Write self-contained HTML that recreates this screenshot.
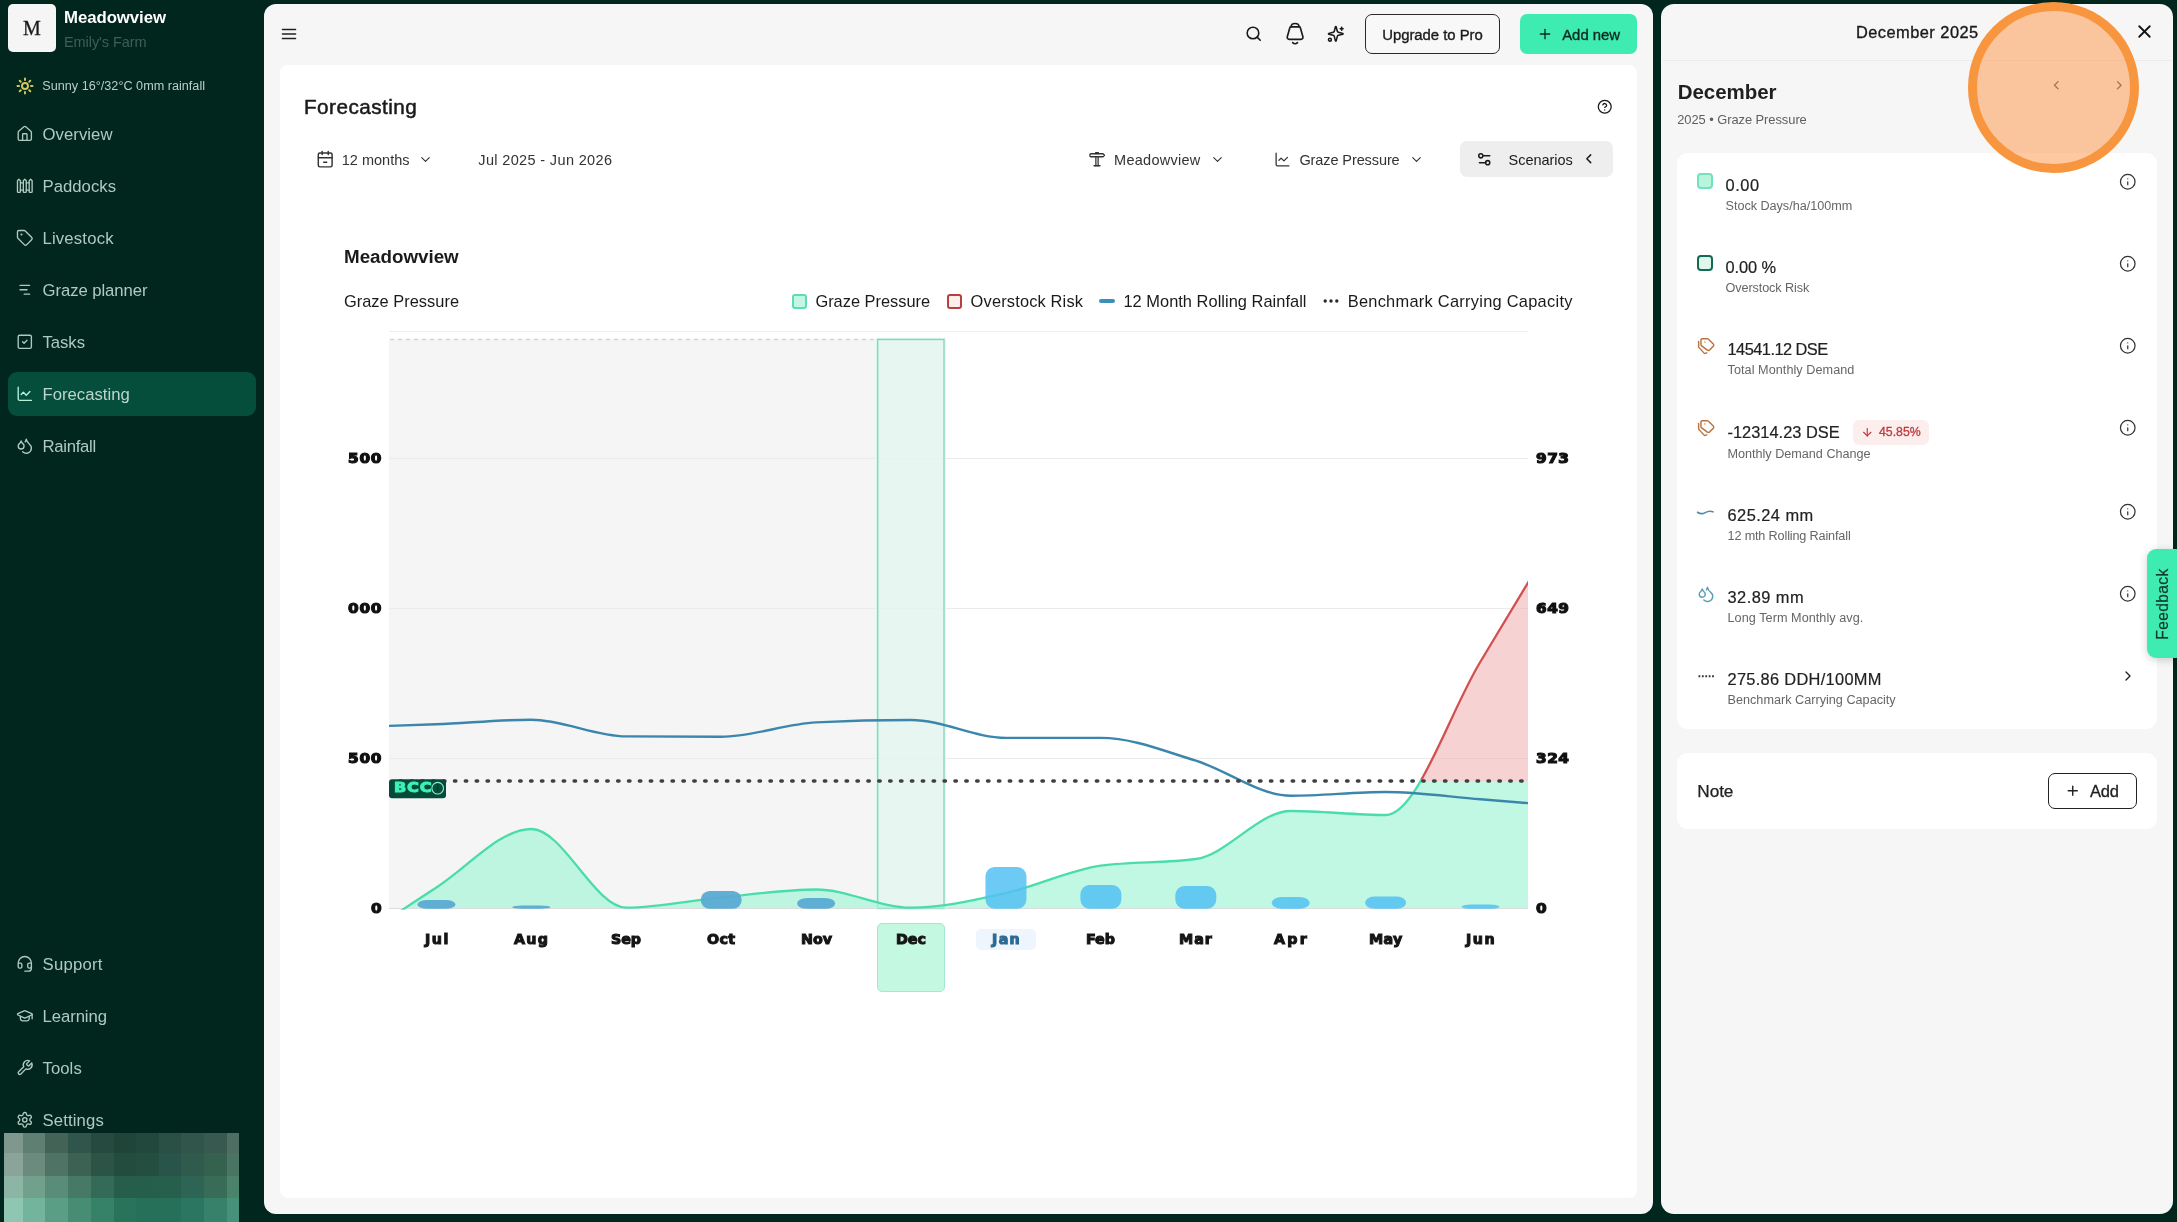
<!DOCTYPE html>
<html lang="en"><head><meta charset="utf-8"><title>Forecasting - Meadowview</title>
<style>
*{box-sizing:border-box;margin:0;padding:0}
html,body{width:2177px;height:1222px;overflow:hidden;background:#01261d;font-family:'Liberation Sans', sans-serif}
#app{position:absolute;left:0;top:0;width:2177px;height:1222px;will-change:transform}
.t{position:absolute;white-space:nowrap}
.b{position:absolute}
.ic{position:absolute;overflow:visible}
svg.full{position:absolute;left:0;top:0;width:2177px;height:1222px;overflow:hidden}
</style></head>
<body>
<div id="app">
<div class="b" style="left:8px;top:4px;width:48px;height:48px;background:#f5f5f5;border-radius:5px"></div>
<div class="t" id="logoM" style="left:23.00px;top:18.00px;font-size:20px;line-height:20px;color:#1a1a1a;font-weight:400;font-family:'Liberation Serif', serif;letter-spacing:0.000px;-webkit-text-stroke:0.3px #1a1a1a;">M</div>
<div class="t" id="sbTitle" style="left:64.00px;top:10.00px;font-size:16.8px;line-height:16.8px;color:#ffffff;font-weight:700;font-family:'Liberation Sans', sans-serif;letter-spacing:-0.066px;">Meadowview</div>
<div class="t" id="sbSub" style="left:64.00px;top:35.00px;font-size:14.5px;line-height:14.5px;color:#3d6054;font-weight:400;font-family:'Liberation Sans', sans-serif;letter-spacing:-0.075px;">Emily's Farm</div>
<svg class="ic" style="left:16.20px;top:76.80px;width:18px;height:18px;color:#d2c75e" viewBox="0 0 24 24" fill="none" stroke="currentColor" stroke-width="2.6" stroke-linecap="round" stroke-linejoin="round" ><circle cx="12" cy="12" r="4"/><path d="M12 2v2"/><path d="M12 20v2"/><path d="m4.93 4.93 1.41 1.41"/><path d="m17.66 17.66 1.41 1.41"/><path d="M2 12h2"/><path d="M20 12h2"/><path d="m6.34 17.66-1.41 1.41"/><path d="m19.07 4.93-1.41 1.41"/></svg>
<div class="t" id="weather" style="left:42.30px;top:80.00px;font-size:12.65px;line-height:12.65px;color:#b9cec7;font-weight:400;font-family:'Liberation Sans', sans-serif;letter-spacing:0.005px;">Sunny 16°/32°C 0mm rainfall</div>
<div class="b" style="left:8px;top:372px;width:248px;height:44px;background:#054e3c;border-radius:9px"></div>
<svg class="ic" style="left:16.00px;top:125.20px;width:17.6px;height:17.6px;color:#b0c9c1" viewBox="0 0 24 24" fill="none" stroke="currentColor" stroke-width="1.85" stroke-linecap="round" stroke-linejoin="round" ><path d="M15 21v-8a1 1 0 0 0-1-1h-4a1 1 0 0 0-1 1v8"/><path d="M3 10a2 2 0 0 1 .709-1.528l7-5.999a2 2 0 0 1 2.582 0l7 5.999A2 2 0 0 1 21 10v9a2 2 0 0 1-2 2H5a2 2 0 0 1-2-2z"/></svg>
<div class="t" id="nav0" style="left:42.50px;top:127.00px;font-size:16.7px;line-height:16.7px;color:#b0c9c1;font-weight:400;font-family:'Liberation Sans', sans-serif;letter-spacing:0.065px;">Overview</div>
<svg class="ic" style="left:16.00px;top:177.20px;width:17.6px;height:17.6px;color:#b0c9c1" viewBox="0 0 24 24" fill="none" stroke="currentColor" stroke-width="1.85" stroke-linecap="round" stroke-linejoin="round" ><path d="M4 3 2 5v15c0 .6.4 1 1 1h2c.6 0 1-.4 1-1V5Z"/><path d="M6 8h4"/><path d="M6 18h4"/><path d="m12 3-2 2v15c0 .6.4 1 1 1h2c.6 0 1-.4 1-1V5Z"/><path d="M14 8h4"/><path d="M14 18h4"/><path d="m20 3-2 2v15c0 .6.4 1 1 1h2c.6 0 1-.4 1-1V5Z"/></svg>
<div class="t" id="nav1" style="left:42.50px;top:179.00px;font-size:16.7px;line-height:16.7px;color:#b0c9c1;font-weight:400;font-family:'Liberation Sans', sans-serif;letter-spacing:0.029px;">Paddocks</div>
<svg class="ic" style="left:16.00px;top:229.20px;width:17.6px;height:17.6px;color:#b0c9c1" viewBox="0 0 24 24" fill="none" stroke="currentColor" stroke-width="1.85" stroke-linecap="round" stroke-linejoin="round" ><path d="M12.586 2.586A2 2 0 0 0 11.172 2H4a2 2 0 0 0-2 2v7.172a2 2 0 0 0 .586 1.414l8.704 8.704a2.426 2.426 0 0 0 3.42 0l6.58-6.58a2.426 2.426 0 0 0 0-3.42z"/><circle cx="7.5" cy="7.5" r=".6" fill="currentColor"/></svg>
<div class="t" id="nav2" style="left:42.50px;top:231.00px;font-size:16.7px;line-height:16.7px;color:#b0c9c1;font-weight:400;font-family:'Liberation Sans', sans-serif;letter-spacing:0.180px;">Livestock</div>
<svg class="ic" style="left:16.00px;top:281.20px;width:17.6px;height:17.6px;color:#b0c9c1" viewBox="0 0 24 24" fill="none" stroke="currentColor" stroke-width="1.85" stroke-linecap="round" stroke-linejoin="round" ><path d="M5.500 6H18.500"/><path d="M5.500 12H15"/><path d="M11.200 18H18.500"/></svg>
<div class="t" id="nav3" style="left:42.50px;top:283.00px;font-size:16.7px;line-height:16.7px;color:#b0c9c1;font-weight:400;font-family:'Liberation Sans', sans-serif;letter-spacing:-0.062px;">Graze planner</div>
<svg class="ic" style="left:16.00px;top:333.20px;width:17.6px;height:17.6px;color:#b0c9c1" viewBox="0 0 24 24" fill="none" stroke="currentColor" stroke-width="1.85" stroke-linecap="round" stroke-linejoin="round" ><rect width="18" height="18" x="3" y="3" rx="2"/><path d="m9 12 2 2 4-4"/></svg>
<div class="t" id="nav4" style="left:42.50px;top:335.00px;font-size:16.7px;line-height:16.7px;color:#b0c9c1;font-weight:400;font-family:'Liberation Sans', sans-serif;letter-spacing:-0.039px;">Tasks</div>
<svg class="ic" style="left:16.00px;top:385.20px;width:17.6px;height:17.6px;color:#b4f3da" viewBox="0 0 24 24" fill="none" stroke="currentColor" stroke-width="1.85" stroke-linecap="round" stroke-linejoin="round" ><path d="M3 3v16a2 2 0 0 0 2 2h16"/><path d="m19 9-5 5-4-4-3 3"/></svg>
<div class="t" id="nav5" style="left:42.50px;top:387.00px;font-size:16.7px;line-height:16.7px;color:#bdd5cc;font-weight:400;font-family:'Liberation Sans', sans-serif;letter-spacing:0.006px;">Forecasting</div>
<svg class="ic" style="left:16.00px;top:437.20px;width:17.6px;height:17.6px;color:#b0c9c1" viewBox="0 0 24 24" fill="none" stroke="currentColor" stroke-width="1.85" stroke-linecap="round" stroke-linejoin="round" ><path d="M7 16.3c2.2 0 4-1.83 4-4.05 0-1.16-.57-2.26-1.71-3.19S7.29 6.75 7 5.3c-.29 1.45-1.14 2.84-2.29 3.76S3 11.1 3 12.25c0 2.22 1.8 4.05 4 4.05z"/><path d="M12.56 6.6A10.97 10.97 0 0 0 14 3.02c.5 2.5 2 4.9 4 6.5s3 3.5 3 5.5a6.98 6.98 0 0 1-11.91 4.97"/></svg>
<div class="t" id="nav6" style="left:42.50px;top:439.00px;font-size:16.7px;line-height:16.7px;color:#b0c9c1;font-weight:400;font-family:'Liberation Sans', sans-serif;letter-spacing:-0.272px;">Rainfall</div>
<svg class="ic" style="left:16.00px;top:955.20px;width:17.6px;height:17.6px;color:#b0c9c1" viewBox="0 0 24 24" fill="none" stroke="currentColor" stroke-width="1.85" stroke-linecap="round" stroke-linejoin="round" ><path d="M3 11h3a2 2 0 0 1 2 2v3a2 2 0 0 1-2 2H5a2 2 0 0 1-2-2v-5Zm0 0a9 9 0 1 1 18 0m0 0v5a2 2 0 0 1-2 2h-1a2 2 0 0 1-2-2v-3a2 2 0 0 1 2-2h3Z"/><path d="M21 16v2a4 4 0 0 1-4 4h-5"/></svg>
<div class="t" id="nav7" style="left:42.50px;top:957.00px;font-size:16.7px;line-height:16.7px;color:#b0c9c1;font-weight:400;font-family:'Liberation Sans', sans-serif;letter-spacing:0.258px;">Support</div>
<svg class="ic" style="left:16.00px;top:1007.20px;width:17.6px;height:17.6px;color:#b0c9c1" viewBox="0 0 24 24" fill="none" stroke="currentColor" stroke-width="1.85" stroke-linecap="round" stroke-linejoin="round" ><path d="M21.42 10.922a1 1 0 0 0-.019-1.838L12.83 5.18a2 2 0 0 0-1.66 0L2.6 9.08a1 1 0 0 0 0 1.832l8.57 3.908a2 2 0 0 0 1.66 0z"/><path d="M22 10v6"/><path d="M6 12.5V16a6 3 0 0 0 12 0v-3.5"/></svg>
<div class="t" id="nav8" style="left:42.50px;top:1009.00px;font-size:16.7px;line-height:16.7px;color:#b0c9c1;font-weight:400;font-family:'Liberation Sans', sans-serif;letter-spacing:-0.065px;">Learning</div>
<svg class="ic" style="left:16.00px;top:1059.20px;width:17.6px;height:17.6px;color:#b0c9c1" viewBox="0 0 24 24" fill="none" stroke="currentColor" stroke-width="1.85" stroke-linecap="round" stroke-linejoin="round" ><path d="M14.7 6.3a1 1 0 0 0 0 1.4l1.6 1.6a1 1 0 0 0 1.4 0l3.77-3.77a6 6 0 0 1-7.94 7.94l-6.91 6.91a2.12 2.12 0 0 1-3-3l6.91-6.91a6 6 0 0 1 7.94-7.94l-3.76 3.76z"/></svg>
<div class="t" id="nav9" style="left:42.50px;top:1061.00px;font-size:16.7px;line-height:16.7px;color:#b0c9c1;font-weight:400;font-family:'Liberation Sans', sans-serif;letter-spacing:0.070px;">Tools</div>
<svg class="ic" style="left:16.00px;top:1111.20px;width:17.6px;height:17.6px;color:#b0c9c1" viewBox="0 0 24 24" fill="none" stroke="currentColor" stroke-width="1.85" stroke-linecap="round" stroke-linejoin="round" ><path d="M12.22 2h-.44a2 2 0 0 0-2 2v.18a2 2 0 0 1-1 1.73l-.43.25a2 2 0 0 1-2 0l-.15-.08a2 2 0 0 0-2.73.73l-.22.38a2 2 0 0 0 .73 2.73l.15.1a2 2 0 0 1 1 1.72v.51a2 2 0 0 1-1 1.74l-.15.09a2 2 0 0 0-.73 2.73l.22.38a2 2 0 0 0 2.73.73l.15-.08a2 2 0 0 1 2 0l.43.25a2 2 0 0 1 1 1.73V20a2 2 0 0 0 2 2h.44a2 2 0 0 0 2-2v-.18a2 2 0 0 1 1-1.73l.43-.25a2 2 0 0 1 2 0l.15.08a2 2 0 0 0 2.73-.73l.22-.39a2 2 0 0 0-.73-2.73l-.15-.08a2 2 0 0 1-1-1.74v-.5a2 2 0 0 1 1-1.74l.15-.09a2 2 0 0 0 .73-2.73l-.22-.38a2 2 0 0 0-2.73-.73l-.15.08a2 2 0 0 1-2 0l-.43-.25a2 2 0 0 1-1-1.73V4a2 2 0 0 0-2-2z"/><circle cx="12" cy="12" r="3"/></svg>
<div class="t" id="nav10" style="left:42.50px;top:1113.00px;font-size:16.7px;line-height:16.7px;color:#b0c9c1;font-weight:400;font-family:'Liberation Sans', sans-serif;letter-spacing:0.136px;">Settings</div>
<svg class="full" viewBox="0 0 2177 1222" shape-rendering="crispEdges"><rect x="3.5" y="1133" width="20.0" height="20.5" fill="#7f978d"/><rect x="23" y="1133" width="22.8" height="20.5" fill="#5f7f73"/><rect x="45.3" y="1133" width="23.2" height="20.5" fill="#446357"/><rect x="68" y="1133" width="23.5" height="20.5" fill="#30554a"/><rect x="91" y="1133" width="23.1" height="20.5" fill="#274a40"/><rect x="113.6" y="1133" width="23.1" height="20.5" fill="#1f4438"/><rect x="136.2" y="1133" width="23.1" height="20.5" fill="#22473c"/><rect x="158.8" y="1133" width="23.1" height="20.5" fill="#2a5045"/><rect x="181.4" y="1133" width="23.1" height="20.5" fill="#32554b"/><rect x="204" y="1133" width="23.0" height="20.5" fill="#37594f"/><rect x="226.5" y="1133" width="12.0" height="20.5" fill="#4e6e63"/><rect x="3.5" y="1153" width="20.0" height="23.3" fill="#8aa499"/><rect x="23" y="1153" width="22.8" height="23.3" fill="#6a8b7e"/><rect x="45.3" y="1153" width="23.2" height="23.3" fill="#4f7465"/><rect x="68" y="1153" width="23.5" height="23.3" fill="#3b6252"/><rect x="91" y="1153" width="23.1" height="23.3" fill="#2c5446"/><rect x="113.6" y="1153" width="23.1" height="23.3" fill="#234c3e"/><rect x="136.2" y="1153" width="23.1" height="23.3" fill="#244e40"/><rect x="158.8" y="1153" width="23.1" height="23.3" fill="#29544a"/><rect x="181.4" y="1153" width="23.1" height="23.3" fill="#2f5a4c"/><rect x="204" y="1153" width="23.0" height="23.3" fill="#35614f"/><rect x="226.5" y="1153" width="12.0" height="23.3" fill="#4a7565"/><rect x="3.5" y="1175.8" width="20.0" height="23.1" fill="#8cb5a6"/><rect x="23" y="1175.8" width="22.8" height="23.1" fill="#71a08d"/><rect x="45.3" y="1175.8" width="23.2" height="23.1" fill="#5a8d79"/><rect x="68" y="1175.8" width="23.5" height="23.1" fill="#467a67"/><rect x="91" y="1175.8" width="23.1" height="23.1" fill="#346a58"/><rect x="113.6" y="1175.8" width="23.1" height="23.1" fill="#275e4b"/><rect x="136.2" y="1175.8" width="23.1" height="23.1" fill="#265e4c"/><rect x="158.8" y="1175.8" width="23.1" height="23.1" fill="#275f4d"/><rect x="181.4" y="1175.8" width="23.1" height="23.1" fill="#2e6453"/><rect x="204" y="1175.8" width="23.0" height="23.1" fill="#386c59"/><rect x="226.5" y="1175.8" width="12.0" height="23.1" fill="#4a826c"/><rect x="3.5" y="1198.4" width="20.0" height="24.1" fill="#8ec6b1"/><rect x="23" y="1198.4" width="22.8" height="24.1" fill="#72b49c"/><rect x="45.3" y="1198.4" width="23.2" height="24.1" fill="#5a9e85"/><rect x="68" y="1198.4" width="23.5" height="24.1" fill="#468d73"/><rect x="91" y="1198.4" width="23.1" height="24.1" fill="#358268"/><rect x="113.6" y="1198.4" width="23.1" height="24.1" fill="#28735a"/><rect x="136.2" y="1198.4" width="23.1" height="24.1" fill="#26705a"/><rect x="158.8" y="1198.4" width="23.1" height="24.1" fill="#26705a"/><rect x="181.4" y="1198.4" width="23.1" height="24.1" fill="#2b7660"/><rect x="204" y="1198.4" width="23.0" height="24.1" fill="#37806a"/><rect x="226.5" y="1198.4" width="12.0" height="24.1" fill="#479079"/></svg>
<div class="b" style="left:264px;top:4px;width:1389px;height:1210px;background:#f6f6f6;border-radius:12px"></div>
<div class="b" style="left:280px;top:65px;width:1357px;height:1133px;background:#ffffff;border-radius:8px"></div>
<svg class="full" viewBox="0 0 2177 1222"><g stroke="#222" stroke-width="1.6" stroke-linecap="round"><path d="M282.500 29.500h13M282.500 34h13M282.500 38.500h13"/></g></svg>
<svg class="ic" style="left:1245.10px;top:25.00px;width:17.4px;height:17.4px;color:#1a1a1a" viewBox="0 0 24 24" fill="none" stroke="currentColor" stroke-width="2.2" stroke-linecap="round" stroke-linejoin="round" ><circle cx="11" cy="11" r="8"/><path d="m21 21-4.3-4.3"/></svg>
<svg class="full" viewBox="0 0 2177 1222"><g fill="none" stroke="#1a1a1a" stroke-width="1.650" stroke-linecap="round" stroke-linejoin="round"><path d="M1291.200 26.700c0-2 1.700-3.200 3.900-3.200s3.900 1.200 3.900 3.200"/><path d="M1290.800 26.800h8.600c.500 0 .800.300.900.700l2.600 9.300c.400 1.400-.500 2.500-1.900 2.500h-11.800c-1.400 0-2.300-1.100-1.900-2.500l2.600-9.300c.100-.400.400-.700.900-.700z"/><path d="M1292.700 42.600c1.400 1.600 3.400 1.600 4.800 0"/></g></svg>
<svg class="ic" style="left:1327.10px;top:25.00px;width:17.6px;height:17.6px;color:#1a1a1a" viewBox="0 0 24 24" fill="none" stroke="currentColor" stroke-width="2.1" stroke-linecap="round" stroke-linejoin="round" ><path d="M9.937 15.5A2 2 0 0 0 8.5 14.063l-6.135-1.582a.5.5 0 0 1 0-.962L8.5 9.936A2 2 0 0 0 9.937 8.5l1.582-6.135a.5.5 0 0 1 .963 0L14.063 8.5A2 2 0 0 0 15.5 9.937l6.135 1.581a.5.5 0 0 1 0 .964L15.5 14.063a2 2 0 0 0-1.437 1.437l-1.582 6.135a.5.5 0 0 1-.963 0z"/><path d="M20 3v4"/><path d="M22 5h-4"/><circle cx="4" cy="20" r="2"/></svg>
<div class="b" style="left:1365px;top:14px;width:135px;height:40px;border:1px solid #2a2a2a;border-radius:7px;background:#f8f8f8"></div>
<div class="t" id="upg" style="left:1382.20px;top:28.00px;font-size:14.9px;line-height:14.9px;color:#1a1a1a;font-weight:400;font-family:'Liberation Sans', sans-serif;letter-spacing:-0.031px;-webkit-text-stroke:0.35px #1a1a1a;">Upgrade to Pro</div>
<div class="b" style="left:1520px;top:14px;width:117px;height:40px;background:#3eebb1;border-radius:7px"></div>
<svg class="ic" style="left:1537.00px;top:26.30px;width:16px;height:16px;color:#0b2a20" viewBox="0 0 24 24" fill="none" stroke="currentColor" stroke-width="2" stroke-linecap="round" stroke-linejoin="round" ><path d="M5 12h14"/><path d="M12 5v14"/></svg>
<div class="t" id="addnew" style="left:1562.20px;top:28.00px;font-size:14.9px;line-height:14.9px;color:#0b2a20;font-weight:400;font-family:'Liberation Sans', sans-serif;letter-spacing:-0.009px;-webkit-text-stroke:0.35px #0b2a20;">Add new</div>
<div class="t" id="title" style="left:304.00px;top:97.00px;font-size:20.7px;line-height:20.7px;color:#1a1a1a;font-weight:400;font-family:'Liberation Sans', sans-serif;letter-spacing:0.466px;-webkit-text-stroke:0.5px #1a1a1a;">Forecasting</div>
<svg class="ic" style="left:1597.25px;top:99.25px;width:15.5px;height:15.5px;color:#1a1a1a" viewBox="0 0 24 24" fill="none" stroke="currentColor" stroke-width="2" stroke-linecap="round" stroke-linejoin="round" ><circle cx="12" cy="12" r="10"/><path d="M9.09 9a3 3 0 0 1 5.83 1c0 2-3 3-3 3"/><path d="M12 17h.01"/></svg>
<svg class="ic" style="left:315.80px;top:149.60px;width:18.4px;height:18.4px;color:#333" viewBox="0 0 24 24" fill="none" stroke="currentColor" stroke-width="1.9" stroke-linecap="round" stroke-linejoin="round" ><path d="M8 2v4"/><path d="M16 2v4"/><rect width="18" height="18" x="3" y="4" rx="2"/><path d="M3 10h18"/><path d="M10 16h4"/></svg>
<div class="t" id="c12" style="left:341.75px;top:153.00px;font-size:14.5px;line-height:14.5px;color:#333;font-weight:400;font-family:'Liberation Sans', sans-serif;letter-spacing:0.004px;">12 months</div>
<svg class="ic" style="left:417.90px;top:151.70px;width:15px;height:15px;color:#333" viewBox="0 0 24 24" fill="none" stroke="currentColor" stroke-width="1.8" stroke-linecap="round" stroke-linejoin="round" ><path d="m6 9 6 6 6-6"/></svg>
<div class="t" id="crange" style="left:478.30px;top:153.00px;font-size:14.5px;line-height:14.5px;color:#333;font-weight:400;font-family:'Liberation Sans', sans-serif;letter-spacing:0.351px;">Jul 2025 - Jun 2026</div>
<svg class="ic" style="left:1088.00px;top:150.20px;width:18px;height:18px;color:#333" viewBox="0 0 24 24" fill="none" stroke="currentColor" stroke-width="1.7" stroke-linecap="round" stroke-linejoin="round" ><path d="M10.5 9v12"/><path d="M13.5 9v12"/><path d="M10.5 3.5h3"/><path d="M10.5 3.5v1.500"/><path d="M13.5 3.5v1.5"/><path d="M4 5h16l2 2-2 2H4a1.5 1.5 0 0 1-1.5-1.500v-1A1.500 1.500 0 0 1 4 5z"/><path d="M8 21h8"/></svg>
<div class="t" id="cmead" style="left:1114.10px;top:153.00px;font-size:14.5px;line-height:14.5px;color:#333;font-weight:400;font-family:'Liberation Sans', sans-serif;letter-spacing:0.264px;">Meadowview</div>
<svg class="ic" style="left:1209.50px;top:151.70px;width:15px;height:15px;color:#333" viewBox="0 0 24 24" fill="none" stroke="currentColor" stroke-width="1.8" stroke-linecap="round" stroke-linejoin="round" ><path d="m6 9 6 6 6-6"/></svg>
<svg class="ic" style="left:1273.50px;top:150.50px;width:17px;height:17px;color:#333" viewBox="0 0 24 24" fill="none" stroke="currentColor" stroke-width="1.8" stroke-linecap="round" stroke-linejoin="round" ><path d="M3 3v16a2 2 0 0 0 2 2h16"/><path d="m19 9-5 5-4-4-3 3"/></svg>
<div class="t" id="cgraze" style="left:1299.40px;top:153.00px;font-size:14.5px;line-height:14.5px;color:#333;font-weight:400;font-family:'Liberation Sans', sans-serif;letter-spacing:-0.096px;">Graze Pressure</div>
<svg class="ic" style="left:1408.50px;top:151.70px;width:15px;height:15px;color:#333" viewBox="0 0 24 24" fill="none" stroke="currentColor" stroke-width="1.8" stroke-linecap="round" stroke-linejoin="round" ><path d="m6 9 6 6 6-6"/></svg>
<div class="b" style="left:1460px;top:141px;width:153px;height:36px;background:#eeeeee;border-radius:7px"></div>
<svg class="ic" style="left:1475.75px;top:150.75px;width:16.5px;height:16.5px;color:#1a1a1a" viewBox="0 0 24 24" fill="none" stroke="currentColor" stroke-width="2.2" stroke-linecap="round" stroke-linejoin="round" ><path d="M20 7h-9"/><path d="M14 17H5"/><circle cx="17" cy="17" r="3"/><circle cx="7" cy="7" r="3"/></svg>
<div class="t" id="cscen" style="left:1508.50px;top:153.00px;font-size:14.5px;line-height:14.5px;color:#1a1a1a;font-weight:400;font-family:'Liberation Sans', sans-serif;letter-spacing:-0.023px;">Scenarios</div>
<svg class="ic" style="left:1581.25px;top:151.05px;width:15.5px;height:15.5px;color:#1a1a1a" viewBox="0 0 24 24" fill="none" stroke="currentColor" stroke-width="2.2" stroke-linecap="round" stroke-linejoin="round" ><path d="m15 18-6-6 6-6"/></svg>
<div class="t" id="chTitle" style="left:344.00px;top:248.00px;font-size:18.8px;line-height:18.8px;color:#1a1a1a;font-weight:700;font-family:'Liberation Sans', sans-serif;letter-spacing:-0.013px;">Meadowview</div>
<div class="t" id="chSub" style="left:344.00px;top:293.00px;font-size:16.4px;line-height:16.4px;color:#1a1a1a;font-weight:400;font-family:'Liberation Sans', sans-serif;letter-spacing:0.017px;">Graze Pressure</div>
<div class="b" style="left:791.5px;top:293.5px;width:15.0px;height:15.0px;background:#c4f7e1;border:2px solid #5edcb2;border-radius:3px"></div>
<div class="t" id="lg1" style="left:815.40px;top:293.00px;font-size:16.4px;line-height:16.4px;color:#1a1a1a;font-weight:400;font-family:'Liberation Sans', sans-serif;letter-spacing:0.001px;">Graze Pressure</div>
<div class="b" style="left:947px;top:293.5px;width:15px;height:15.0px;background:#fdeeee;border:2px solid #b5403f;border-radius:3px"></div>
<div class="t" id="lg2" style="left:970.60px;top:293.00px;font-size:16.4px;line-height:16.4px;color:#1a1a1a;font-weight:400;font-family:'Liberation Sans', sans-serif;letter-spacing:0.169px;">Overstock Risk</div>
<div class="b" style="left:1099px;top:299.2px;width:16px;height:3.6000000000000227px;background:#3a90b8;border-radius:2px"></div>
<div class="t" id="lg3" style="left:1123.40px;top:293.00px;font-size:16.4px;line-height:16.4px;color:#1a1a1a;font-weight:400;font-family:'Liberation Sans', sans-serif;letter-spacing:0.037px;">12 Month Rolling Rainfall</div>
<svg class="full" viewBox="0 0 2177 1222"><g fill="#2a2a2a"><circle cx="1325.200" cy="301" r="1.700"/><circle cx="1331" cy="301" r="1.700"/><circle cx="1336.800" cy="301" r="1.700"/></g></svg>
<div class="t" id="lg4" style="left:1347.70px;top:293.00px;font-size:16.4px;line-height:16.4px;color:#1a1a1a;font-weight:400;font-family:'Liberation Sans', sans-serif;letter-spacing:0.269px;">Benchmark Carrying Capacity</div>
<svg class="full" viewBox="0 0 2177 1222"><defs>
<clipPath id="cpPlot"><rect x="389" y="331" width="1139" height="577"/></clipPath>
<clipPath id="cpLow"><rect x="389" y="781" width="1139" height="127"/></clipPath>
<clipPath id="cpLowL"><rect x="389" y="779.8" width="1139" height="130"/></clipPath>
<clipPath id="cpHigh"><rect x="389" y="331" width="1139" height="450"/></clipPath>
<clipPath id="cpHighL"><rect x="389" y="331" width="1139" height="448.8"/></clipPath>
</defs><rect x="389" y="339" width="488" height="569" fill="#f5f5f5"/><path d="M389 331.500H1528" stroke="#eeeeee" stroke-width="1.2"/><path d="M389 458.5H1528" stroke="#ebebeb" stroke-width="1.2"/><path d="M389 608.5H1528" stroke="#ebebeb" stroke-width="1.2"/><path d="M389 758.5H1528" stroke="#ebebeb" stroke-width="1.2"/><path d="M389 908.5H1528" stroke="#dcdcdc" stroke-width="1.2"/><path d="M390 339.500H877" stroke="#d6d6d6" stroke-width="1.300" stroke-dasharray="4 4"/><rect x="877.700" y="339.500" width="66.300" height="568.5" fill="none" stroke="#d3f9ec" stroke-width="3.400"/><rect x="877.700" y="339.500" width="66.300" height="568.5" fill="#e3f4ee" fill-opacity="0.85" stroke="#8ed1bb" stroke-width="1.300"/><g clip-path="url(#cpLow)"><path d="M341.54,951.00C373.18,929.42,404.82,907.83,436.46,887.50C468.10,867.17,499.74,829.00,531.38,829.00C563.01,829.00,594.65,907.60,626.29,907.60C657.93,907.60,689.57,900.42,721.21,897.40C752.85,894.38,784.49,889.50,816.12,889.50C847.76,889.50,879.40,907.60,911.04,907.60C942.68,907.60,974.32,900.00,1005.96,893.00C1037.60,886.00,1069.24,870.00,1100.88,865.60C1132.51,861.20,1164.15,863.40,1195.79,859.00C1227.43,854.60,1259.07,811.00,1290.71,811.00C1322.35,811.00,1353.99,815.00,1385.62,815.00C1417.26,815.00,1448.90,713.33,1480.54,661.50C1512.18,609.67,1543.82,556.83,1575.46,504.00L1575.46,908L341.54,908Z" fill="#a8f5d8" fill-opacity="0.72"/></g><g clip-path="url(#cpHigh)"><path d="M341.54,951.00C373.18,929.42,404.82,907.83,436.46,887.50C468.10,867.17,499.74,829.00,531.38,829.00C563.01,829.00,594.65,907.60,626.29,907.60C657.93,907.60,689.57,900.42,721.21,897.40C752.85,894.38,784.49,889.50,816.12,889.50C847.76,889.50,879.40,907.60,911.04,907.60C942.68,907.60,974.32,900.00,1005.96,893.00C1037.60,886.00,1069.24,870.00,1100.88,865.60C1132.51,861.20,1164.15,863.40,1195.79,859.00C1227.43,854.60,1259.07,811.00,1290.71,811.00C1322.35,811.00,1353.99,815.00,1385.62,815.00C1417.26,815.00,1448.90,713.33,1480.54,661.50C1512.18,609.67,1543.82,556.83,1575.46,504.00L1575.46,908L341.54,908Z" fill="#f2b6b6" fill-opacity="0.62"/></g><g clip-path="url(#cpLowL)"><path d="M341.54,951.00C373.18,929.42,404.82,907.83,436.46,887.50C468.10,867.17,499.74,829.00,531.38,829.00C563.01,829.00,594.65,907.60,626.29,907.60C657.93,907.60,689.57,900.42,721.21,897.40C752.85,894.38,784.49,889.50,816.12,889.50C847.76,889.50,879.40,907.60,911.04,907.60C942.68,907.60,974.32,900.00,1005.96,893.00C1037.60,886.00,1069.24,870.00,1100.88,865.60C1132.51,861.20,1164.15,863.40,1195.79,859.00C1227.43,854.60,1259.07,811.00,1290.71,811.00C1322.35,811.00,1353.99,815.00,1385.62,815.00C1417.26,815.00,1448.90,713.33,1480.54,661.50C1512.18,609.67,1543.82,556.83,1575.46,504.00" fill="none" stroke="#4bdcab" stroke-width="2.300"/></g><g clip-path="url(#cpHighL)"><path d="M341.54,951.00C373.18,929.42,404.82,907.83,436.46,887.50C468.10,867.17,499.74,829.00,531.38,829.00C563.01,829.00,594.65,907.60,626.29,907.60C657.93,907.60,689.57,900.42,721.21,897.40C752.85,894.38,784.49,889.50,816.12,889.50C847.76,889.50,879.40,907.60,911.04,907.60C942.68,907.60,974.32,900.00,1005.96,893.00C1037.60,886.00,1069.24,870.00,1100.88,865.60C1132.51,861.20,1164.15,863.40,1195.79,859.00C1227.43,854.60,1259.07,811.00,1290.71,811.00C1322.35,811.00,1353.99,815.00,1385.62,815.00C1417.26,815.00,1448.90,713.33,1480.54,661.50C1512.18,609.67,1543.82,556.83,1575.46,504.00" fill="none" stroke="#d2504f" stroke-width="2.300"/></g><rect x="417.46" y="900" width="38" height="8.8" rx="10" ry="4.40" fill="#5aaad2" fill-opacity="0.95"/><rect x="512.38" y="905.5" width="38" height="3.3" rx="10" ry="1.65" fill="#5aaad2" fill-opacity="0.95"/><rect x="700.71" y="891" width="41" height="17.8" rx="9" ry="8.90" fill="#5aaad2" fill-opacity="0.95"/><rect x="797.12" y="898" width="38" height="10.8" rx="10" ry="5.40" fill="#5aaad2" fill-opacity="0.95"/><rect x="985.46" y="867" width="41" height="41.8" rx="9" ry="9.50" fill="#52c1f2" fill-opacity="0.85"/><rect x="1080.38" y="885" width="41" height="23.8" rx="9" ry="9.50" fill="#52c1f2" fill-opacity="0.85"/><rect x="1175.29" y="886" width="41" height="22.8" rx="9" ry="9.50" fill="#52c1f2" fill-opacity="0.85"/><rect x="1271.71" y="897" width="38" height="11.8" rx="10" ry="5.90" fill="#52c1f2" fill-opacity="0.85"/><rect x="1365.12" y="896.6" width="41" height="12.2" rx="9" ry="6.10" fill="#52c1f2" fill-opacity="0.85"/><rect x="1461.54" y="904.5" width="38" height="4.3" rx="10" ry="2.15" fill="#52c1f2" fill-opacity="0.85"/><g clip-path="url(#cpPlot)"><path d="M341.54,727.50C373.18,726.55,404.82,725.60,436.46,724.30C468.10,723.00,499.74,719.70,531.38,719.70C563.01,719.70,594.65,736.20,626.29,736.40C657.93,736.60,689.57,736.70,721.21,736.70C752.85,736.70,784.49,724.00,816.12,722.40C847.76,720.80,879.40,720.00,911.04,720.00C942.68,720.00,974.32,737.90,1005.96,737.90C1037.60,737.90,1069.24,737.90,1100.88,737.90C1132.51,737.90,1164.15,751.07,1195.79,760.70C1227.43,770.33,1259.07,795.70,1290.71,795.70C1322.35,795.70,1353.99,792.00,1385.62,792.00C1417.26,792.00,1448.90,796.80,1480.54,799.30C1512.18,801.80,1543.82,804.40,1575.46,807.00" fill="none" stroke="#3b86ad" stroke-width="2.400"/></g><path d="M400 781H1528" stroke="#404040" stroke-width="3.400" stroke-linecap="round" stroke-dasharray="1.500 9.380"/><rect x="389" y="779.300" width="57" height="19" rx="3" fill="#044c3a"/></svg>
<div class="t" id="bcc" style="left:393.90px;top:780.00px;font-size:14px;line-height:14px;color:#3ff0b5;font-weight:700;font-family:'DejaVu Sans', 'Liberation Sans', sans-serif;letter-spacing:0.687px;-webkit-text-stroke:1.0px #3ff0b5;transform:scaleX(1.15);transform-origin:0 50%;">BCC</div>
<svg class="full" viewBox="0 0 2177 1222"><circle cx="437.700" cy="788.200" r="5.800" fill="#05513e" stroke="#8feaca" stroke-width="1.100"/><path d="M437.700 787.300v3.600M437.700 784.800v0.700" stroke="#033327" stroke-width="1.300" stroke-linecap="round"/></svg>
<div class="t" id="yl0" style="left:348.00px;top:452.00px;font-size:13.3px;line-height:13.3px;color:#111111;font-weight:700;font-family:'DejaVu Sans', 'Liberation Sans', sans-serif;letter-spacing:0.682px;-webkit-text-stroke:1.1px #111111;transform:scaleX(1.15);transform-origin:0 50%;">500</div>
<div class="t" id="yl1" style="left:348.00px;top:602.00px;font-size:13.3px;line-height:13.3px;color:#111111;font-weight:700;font-family:'DejaVu Sans', 'Liberation Sans', sans-serif;letter-spacing:0.682px;-webkit-text-stroke:1.1px #111111;transform:scaleX(1.15);transform-origin:0 50%;">000</div>
<div class="t" id="yl2" style="left:348.00px;top:752.00px;font-size:13.3px;line-height:13.3px;color:#111111;font-weight:700;font-family:'DejaVu Sans', 'Liberation Sans', sans-serif;letter-spacing:0.682px;-webkit-text-stroke:1.1px #111111;transform:scaleX(1.15);transform-origin:0 50%;">500</div>
<div class="t" id="yl3" style="left:370.50px;top:902.00px;font-size:13.3px;line-height:13.3px;color:#111111;font-weight:700;font-family:'DejaVu Sans', 'Liberation Sans', sans-serif;letter-spacing:0.000px;-webkit-text-stroke:1.1px #111111;transform:scaleX(1.15);transform-origin:0 50%;">0</div>
<div class="t" id="yr0" style="left:1536.00px;top:452.00px;font-size:13.3px;line-height:13.3px;color:#111111;font-weight:700;font-family:'DejaVu Sans', 'Liberation Sans', sans-serif;letter-spacing:0.465px;-webkit-text-stroke:1.1px #111111;transform:scaleX(1.15);transform-origin:0 50%;">973</div>
<div class="t" id="yr1" style="left:1536.00px;top:602.00px;font-size:13.3px;line-height:13.3px;color:#111111;font-weight:700;font-family:'DejaVu Sans', 'Liberation Sans', sans-serif;letter-spacing:0.465px;-webkit-text-stroke:1.1px #111111;transform:scaleX(1.15);transform-origin:0 50%;">649</div>
<div class="t" id="yr2" style="left:1536.00px;top:752.00px;font-size:13.3px;line-height:13.3px;color:#111111;font-weight:700;font-family:'DejaVu Sans', 'Liberation Sans', sans-serif;letter-spacing:0.465px;-webkit-text-stroke:1.1px #111111;transform:scaleX(1.15);transform-origin:0 50%;">324</div>
<div class="t" id="yr3" style="left:1536.00px;top:902.00px;font-size:13.3px;line-height:13.3px;color:#111111;font-weight:700;font-family:'DejaVu Sans', 'Liberation Sans', sans-serif;letter-spacing:0.000px;-webkit-text-stroke:1.1px #111111;transform:scaleX(1.15);transform-origin:0 50%;">0</div>
<div class="b" style="left:877px;top:923px;width:68px;height:68.5px;background:#c4f8e1;border:1px solid #a4e9cd;border-radius:5px"></div>
<div class="b" style="left:976px;top:929px;width:60px;height:21px;background:#eef5fc;border-radius:5px"></div>
<div class="t" id="mo0" style="left:424.81px;top:933.00px;font-size:13.6px;line-height:13.6px;color:#151515;font-weight:700;font-family:'DejaVu Sans', 'Liberation Sans', sans-serif;letter-spacing:1.392px;-webkit-text-stroke:1.0px #151515;transform:scaleX(1.05);transform-origin:0 50%;">Jul</div>
<div class="t" id="mo1" style="left:514.38px;top:933.00px;font-size:13.6px;line-height:13.6px;color:#151515;font-weight:700;font-family:'DejaVu Sans', 'Liberation Sans', sans-serif;letter-spacing:1.222px;-webkit-text-stroke:1.0px #151515;transform:scaleX(1.05);transform-origin:0 50%;">Aug</div>
<div class="t" id="mo2" style="left:611.29px;top:933.00px;font-size:13.6px;line-height:13.6px;color:#151515;font-weight:700;font-family:'DejaVu Sans', 'Liberation Sans', sans-serif;letter-spacing:-0.089px;-webkit-text-stroke:1.0px #151515;transform:scaleX(1.05);transform-origin:0 50%;">Sep</div>
<div class="t" id="mo3" style="left:707.21px;top:933.00px;font-size:13.6px;line-height:13.6px;color:#151515;font-weight:700;font-family:'DejaVu Sans', 'Liberation Sans', sans-serif;letter-spacing:0.271px;-webkit-text-stroke:1.0px #151515;transform:scaleX(1.05);transform-origin:0 50%;">Oct</div>
<div class="t" id="mo4" style="left:800.62px;top:933.00px;font-size:13.6px;line-height:13.6px;color:#151515;font-weight:700;font-family:'DejaVu Sans', 'Liberation Sans', sans-serif;letter-spacing:-0.027px;-webkit-text-stroke:1.0px #151515;transform:scaleX(1.05);transform-origin:0 50%;">Nov</div>
<div class="t" id="mo5" style="left:896.04px;top:933.00px;font-size:13.6px;line-height:13.6px;color:#151515;font-weight:700;font-family:'DejaVu Sans', 'Liberation Sans', sans-serif;letter-spacing:0.004px;-webkit-text-stroke:1.0px #151515;transform:scaleX(1.05);transform-origin:0 50%;">Dec</div>
<div class="t" id="mo6" style="left:992.06px;top:933.00px;font-size:13.6px;line-height:13.6px;color:#2b6a93;font-weight:700;font-family:'DejaVu Sans', 'Liberation Sans', sans-serif;letter-spacing:1.277px;-webkit-text-stroke:1.0px #2b6a93;transform:scaleX(1.05);transform-origin:0 50%;">Jan</div>
<div class="t" id="mo7" style="left:1086.42px;top:933.00px;font-size:13.6px;line-height:13.6px;color:#151515;font-weight:700;font-family:'DejaVu Sans', 'Liberation Sans', sans-serif;letter-spacing:-0.082px;-webkit-text-stroke:1.0px #151515;transform:scaleX(1.05);transform-origin:0 50%;">Feb</div>
<div class="t" id="mo8" style="left:1179.39px;top:933.00px;font-size:13.6px;line-height:13.6px;color:#151515;font-weight:700;font-family:'DejaVu Sans', 'Liberation Sans', sans-serif;letter-spacing:0.916px;-webkit-text-stroke:1.0px #151515;transform:scaleX(1.05);transform-origin:0 50%;">Mar</div>
<div class="t" id="mo9" style="left:1274.31px;top:933.00px;font-size:13.6px;line-height:13.6px;color:#151515;font-weight:700;font-family:'DejaVu Sans', 'Liberation Sans', sans-serif;letter-spacing:2.135px;-webkit-text-stroke:1.0px #151515;transform:scaleX(1.05);transform-origin:0 50%;">Apr</div>
<div class="t" id="mo10" style="left:1369.03px;top:933.00px;font-size:13.6px;line-height:13.6px;color:#151515;font-weight:700;font-family:'DejaVu Sans', 'Liberation Sans', sans-serif;letter-spacing:0.231px;-webkit-text-stroke:1.0px #151515;transform:scaleX(1.05);transform-origin:0 50%;">May</div>
<div class="t" id="mo11" style="left:1466.19px;top:933.00px;font-size:13.6px;line-height:13.6px;color:#151515;font-weight:700;font-family:'DejaVu Sans', 'Liberation Sans', sans-serif;letter-spacing:1.456px;-webkit-text-stroke:1.0px #151515;transform:scaleX(1.05);transform-origin:0 50%;">Jun</div>
<div class="b" style="left:1661px;top:4px;width:512px;height:1210px;background:#f6f6f6;border-radius:13px"></div>
<div class="t" id="rpHead" style="left:1855.90px;top:24.00px;font-size:16.4px;line-height:16.4px;color:#1a1a1a;font-weight:400;font-family:'Liberation Sans', sans-serif;letter-spacing:0.473px;-webkit-text-stroke:0.35px #1a1a1a;">December 2025</div>
<svg class="ic" style="left:2134.30px;top:21.30px;width:21px;height:21px;color:#111" viewBox="0 0 24 24" fill="none" stroke="currentColor" stroke-width="2.1" stroke-linecap="round" stroke-linejoin="round" ><path d="M18 6 6 18"/><path d="m6 6 12 12"/></svg>
<div class="b" style="left:1663px;top:59.5px;width:508px;height:1.2000000000000028px;background:#ebebeb"></div>
<div class="t" id="rpMonth" style="left:1677.70px;top:82.00px;font-size:20.5px;line-height:20.5px;color:#1f1f1f;font-weight:700;font-family:'Liberation Sans', sans-serif;letter-spacing:-0.034px;">December</div>
<div class="t" id="rpSub" style="left:1677.20px;top:114.00px;font-size:12.9px;line-height:12.9px;color:#5f5f5f;font-weight:400;font-family:'Liberation Sans', sans-serif;letter-spacing:-0.051px;">2025 &#8226; Graze Pressure</div>
<svg class="ic" style="left:2048.75px;top:77.55px;width:14.5px;height:14.5px;color:#555" viewBox="0 0 24 24" fill="none" stroke="currentColor" stroke-width="2.3" stroke-linecap="round" stroke-linejoin="round" ><path d="m15 18-6-6 6-6"/></svg>
<svg class="ic" style="left:2111.75px;top:77.55px;width:14.5px;height:14.5px;color:#555" viewBox="0 0 24 24" fill="none" stroke="currentColor" stroke-width="2.3" stroke-linecap="round" stroke-linejoin="round" ><path d="m9 18 6-6-6-6"/></svg>
<div class="b" style="left:1677px;top:153px;width:480px;height:575.5px;background:#fff;border-radius:11px"></div>
<div class="b" style="left:1697.3px;top:173.3px;width:16.0px;height:16.0px;background:#b9f4dc;border:2.200px solid #6fe3bf;border-radius:4px"></div>
<div class="b" style="left:1697.3px;top:255.3px;width:16.0px;height:16.0px;background:#dff6ed;border:2.200px solid #136b53;border-radius:4px"></div>
<div class="t" id="iv0" style="left:1725.50px;top:177.00px;font-size:16.4px;line-height:16.4px;color:#222;font-weight:400;font-family:'Liberation Sans', sans-serif;letter-spacing:0.531px;-webkit-text-stroke:0.2px #222;">0.00</div>
<div class="t" id="is0" style="left:1725.50px;top:200.00px;font-size:12.65px;line-height:12.65px;color:#666;font-weight:400;font-family:'Liberation Sans', sans-serif;letter-spacing:-0.026px;">Stock Days/ha/100mm</div>
<svg class="ic" style="left:2119.05px;top:173.25px;width:17.5px;height:17.5px;color:#333" viewBox="0 0 24 24" fill="none" stroke="currentColor" stroke-width="1.7" stroke-linecap="round" stroke-linejoin="round" ><circle cx="12" cy="12" r="10"/><path d="M12 16v-4"/><path d="M12 8h.01"/></svg>
<div class="t" id="iv1" style="left:1725.50px;top:259.00px;font-size:16.4px;line-height:16.4px;color:#222;font-weight:400;font-family:'Liberation Sans', sans-serif;letter-spacing:-0.106px;-webkit-text-stroke:0.2px #222;">0.00 %</div>
<div class="t" id="is1" style="left:1725.50px;top:282.00px;font-size:12.65px;line-height:12.65px;color:#666;font-weight:400;font-family:'Liberation Sans', sans-serif;letter-spacing:-0.092px;">Overstock Risk</div>
<svg class="ic" style="left:2119.05px;top:255.25px;width:17.5px;height:17.5px;color:#333" viewBox="0 0 24 24" fill="none" stroke="currentColor" stroke-width="1.7" stroke-linecap="round" stroke-linejoin="round" ><circle cx="12" cy="12" r="10"/><path d="M12 16v-4"/><path d="M12 8h.01"/></svg>
<div class="t" id="iv2" style="left:1727.50px;top:341.00px;font-size:16.4px;line-height:16.4px;color:#222;font-weight:400;font-family:'Liberation Sans', sans-serif;letter-spacing:-0.539px;-webkit-text-stroke:0.2px #222;">14541.12 DSE</div>
<div class="t" id="is2" style="left:1727.50px;top:364.00px;font-size:12.65px;line-height:12.65px;color:#666;font-weight:400;font-family:'Liberation Sans', sans-serif;letter-spacing:0.060px;">Total Monthly Demand</div>
<svg class="ic" style="left:2119.05px;top:337.25px;width:17.5px;height:17.5px;color:#333" viewBox="0 0 24 24" fill="none" stroke="currentColor" stroke-width="1.7" stroke-linecap="round" stroke-linejoin="round" ><circle cx="12" cy="12" r="10"/><path d="M12 16v-4"/><path d="M12 8h.01"/></svg>
<div class="t" id="iv3" style="left:1727.50px;top:424.00px;font-size:16.4px;line-height:16.4px;color:#222;font-weight:400;font-family:'Liberation Sans', sans-serif;letter-spacing:0.010px;-webkit-text-stroke:0.2px #222;">-12314.23 DSE</div>
<div class="t" id="is3" style="left:1727.50px;top:448.00px;font-size:12.65px;line-height:12.65px;color:#666;font-weight:400;font-family:'Liberation Sans', sans-serif;letter-spacing:-0.012px;">Monthly Demand Change</div>
<svg class="ic" style="left:2119.05px;top:419.25px;width:17.5px;height:17.5px;color:#333" viewBox="0 0 24 24" fill="none" stroke="currentColor" stroke-width="1.7" stroke-linecap="round" stroke-linejoin="round" ><circle cx="12" cy="12" r="10"/><path d="M12 16v-4"/><path d="M12 8h.01"/></svg>
<div class="t" id="iv4" style="left:1727.50px;top:507.00px;font-size:16.4px;line-height:16.4px;color:#222;font-weight:400;font-family:'Liberation Sans', sans-serif;letter-spacing:0.463px;-webkit-text-stroke:0.2px #222;">625.24 mm</div>
<div class="t" id="is4" style="left:1727.50px;top:530.00px;font-size:12.65px;line-height:12.65px;color:#666;font-weight:400;font-family:'Liberation Sans', sans-serif;letter-spacing:-0.149px;">12 mth Rolling Rainfall</div>
<svg class="ic" style="left:2119.05px;top:503.25px;width:17.5px;height:17.5px;color:#333" viewBox="0 0 24 24" fill="none" stroke="currentColor" stroke-width="1.7" stroke-linecap="round" stroke-linejoin="round" ><circle cx="12" cy="12" r="10"/><path d="M12 16v-4"/><path d="M12 8h.01"/></svg>
<div class="t" id="iv5" style="left:1727.50px;top:589.00px;font-size:16.4px;line-height:16.4px;color:#222;font-weight:400;font-family:'Liberation Sans', sans-serif;letter-spacing:0.458px;-webkit-text-stroke:0.2px #222;">32.89 mm</div>
<div class="t" id="is5" style="left:1727.50px;top:612.00px;font-size:12.65px;line-height:12.65px;color:#666;font-weight:400;font-family:'Liberation Sans', sans-serif;letter-spacing:0.054px;">Long Term Monthly avg.</div>
<svg class="ic" style="left:2119.05px;top:585.25px;width:17.5px;height:17.5px;color:#333" viewBox="0 0 24 24" fill="none" stroke="currentColor" stroke-width="1.7" stroke-linecap="round" stroke-linejoin="round" ><circle cx="12" cy="12" r="10"/><path d="M12 16v-4"/><path d="M12 8h.01"/></svg>
<div class="t" id="iv6" style="left:1727.50px;top:671.00px;font-size:16.4px;line-height:16.4px;color:#222;font-weight:400;font-family:'Liberation Sans', sans-serif;letter-spacing:0.300px;-webkit-text-stroke:0.2px #222;">275.86 DDH/100MM</div>
<div class="t" id="is6" style="left:1727.50px;top:694.00px;font-size:12.65px;line-height:12.65px;color:#666;font-weight:400;font-family:'Liberation Sans', sans-serif;letter-spacing:0.011px;">Benchmark Carrying Capacity</div>
<svg class="ic" style="left:2119.50px;top:668.00px;width:16px;height:16px;color:#222" viewBox="0 0 24 24" fill="none" stroke="currentColor" stroke-width="2" stroke-linecap="round" stroke-linejoin="round" ><path d="m9 18 6-6-6-6"/></svg>
<svg class="ic" style="left:1697.85px;top:337.95px;width:16.5px;height:16.5px;color:#b9733f" viewBox="0 0 24 24" fill="none" stroke="currentColor" stroke-width="2.1" stroke-linecap="round" stroke-linejoin="round" ><path d="M4.300 2.500a1.500 1.500 0 0 1 1.500-1.500h7.700a2 2 0 0 1 1.400.600l7.300 7.100a2.300 2.300 0 0 1 0 3.300l-5.300 5.600a2.300 2.300 0 0 1-3.300 0L4.900 11.100a2 2 0 0 1-.600-1.400z"/><circle cx="10" cy="5.700" r="1" fill="currentColor" stroke="none"/><path d="M0.900 5.200v7.400a2 2 0 0 0 .600 1.400l7.400 8a1.500 1.500 0 0 0 1.500.400l2.400-.800"/></svg>
<svg class="ic" style="left:1697.85px;top:419.95px;width:16.5px;height:16.5px;color:#b9733f" viewBox="0 0 24 24" fill="none" stroke="currentColor" stroke-width="2.1" stroke-linecap="round" stroke-linejoin="round" ><path d="M4.300 2.500a1.500 1.500 0 0 1 1.500-1.500h7.700a2 2 0 0 1 1.400.600l7.300 7.100a2.300 2.300 0 0 1 0 3.300l-5.300 5.600a2.300 2.300 0 0 1-3.300 0L4.900 11.100a2 2 0 0 1-.600-1.400z"/><circle cx="10" cy="5.700" r="1" fill="currentColor" stroke="none"/><path d="M0.900 5.200v7.400a2 2 0 0 0 .600 1.400l7.400 8a1.500 1.500 0 0 0 1.500.400l2.400-.800"/></svg>
<svg class="ic" style="left:1696.45px;top:502.55px;width:18.5px;height:18.5px;color:#4e8ca6" viewBox="0 0 24 24" fill="none" stroke="currentColor" stroke-width="2.1" stroke-linecap="round" stroke-linejoin="round" ><path d="M2 12c3.500 2.500 6.500 2.500 10 .5s6.500-2.500 10-1"/></svg>
<svg class="ic" style="left:1696.90px;top:585.40px;width:18px;height:18px;color:#5a9db4" viewBox="0 0 24 24" fill="none" stroke="currentColor" stroke-width="1.9" stroke-linecap="round" stroke-linejoin="round" ><path d="M7 16.3c2.2 0 4-1.83 4-4.05 0-1.16-.57-2.26-1.71-3.19S7.29 6.75 7 5.3c-.29 1.45-1.14 2.84-2.29 3.76S3 11.1 3 12.25c0 2.22 1.8 4.05 4 4.05z"/><path d="M12.56 6.6A10.97 10.97 0 0 0 14 3.02c.5 2.5 2 4.9 4 6.5s3 3.5 3 5.5a6.98 6.98 0 0 1-11.91 4.97"/></svg>
<svg class="full" viewBox="0 0 2177 1222"><path d="M1698.500 676.300H1714" stroke="#333" stroke-width="2" stroke-dasharray="1.800 1.600"/></svg>
<div class="b" style="left:1852.5px;top:419.5px;width:76.5px;height:25.0px;background:#fdeeee;border-radius:6px"></div>
<svg class="ic" style="left:1860.75px;top:425.75px;width:12.5px;height:12.5px;color:#c0393b" viewBox="0 0 24 24" fill="none" stroke="currentColor" stroke-width="2.2" stroke-linecap="round" stroke-linejoin="round" ><path d="M12 5v14"/><path d="m19 12-7 7-7-7"/></svg>
<div class="t" id="badge" style="left:1879.00px;top:426.00px;font-size:12.3px;line-height:12.3px;color:#c0393b;font-weight:400;font-family:'Liberation Sans', sans-serif;letter-spacing:-0.004px;-webkit-text-stroke:0.3px #c0393b;">45.85%</div>
<div class="b" style="left:1677px;top:753px;width:480px;height:75.5px;background:#fff;border-radius:11px"></div>
<div class="t" id="note" style="left:1697.30px;top:783.00px;font-size:17.2px;line-height:17.2px;color:#222;font-weight:400;font-family:'Liberation Sans', sans-serif;letter-spacing:-0.071px;-webkit-text-stroke:0.25px #222;">Note</div>
<div class="b" style="left:2048px;top:773px;width:89px;height:35.5px;border:1px solid #222;border-radius:7px;background:#fff"></div>
<svg class="ic" style="left:2065.25px;top:783.05px;width:15.5px;height:15.5px;color:#222" viewBox="0 0 24 24" fill="none" stroke="currentColor" stroke-width="2.2" stroke-linecap="round" stroke-linejoin="round" ><path d="M5 12h14"/><path d="M12 5v14"/></svg>
<div class="t" id="addb" style="left:2090.00px;top:783.00px;font-size:16.5px;line-height:16.5px;color:#222;font-weight:400;font-family:'Liberation Sans', sans-serif;letter-spacing:-0.180px;-webkit-text-stroke:0.3px #222;">Add</div>
<div class="b" style="left:2147px;top:549px;width:38px;height:109px;background:#3eebb1;border-radius:9px;box-shadow:0 2px 8px rgba(0,0,0,0.18)"></div>
<div class="t" id="fb" style="left:2163px;top:603.500px;width:0;height:0"><div id="fbi" style="position:absolute;white-space:nowrap;transform:translate(-50%,-50%) rotate(-90deg);font-size:15.600px;line-height:16px;color:#10382c;-webkit-text-stroke:0.2px #10382c;letter-spacing:0.350px">Feedback</div></div>
<div class="b" style="left:1968px;top:2px;width:171px;height:171px;border-radius:50%;background:rgba(253,148,66,0.5);border:9px solid #f8953f"></div>
</div>
</body></html>
